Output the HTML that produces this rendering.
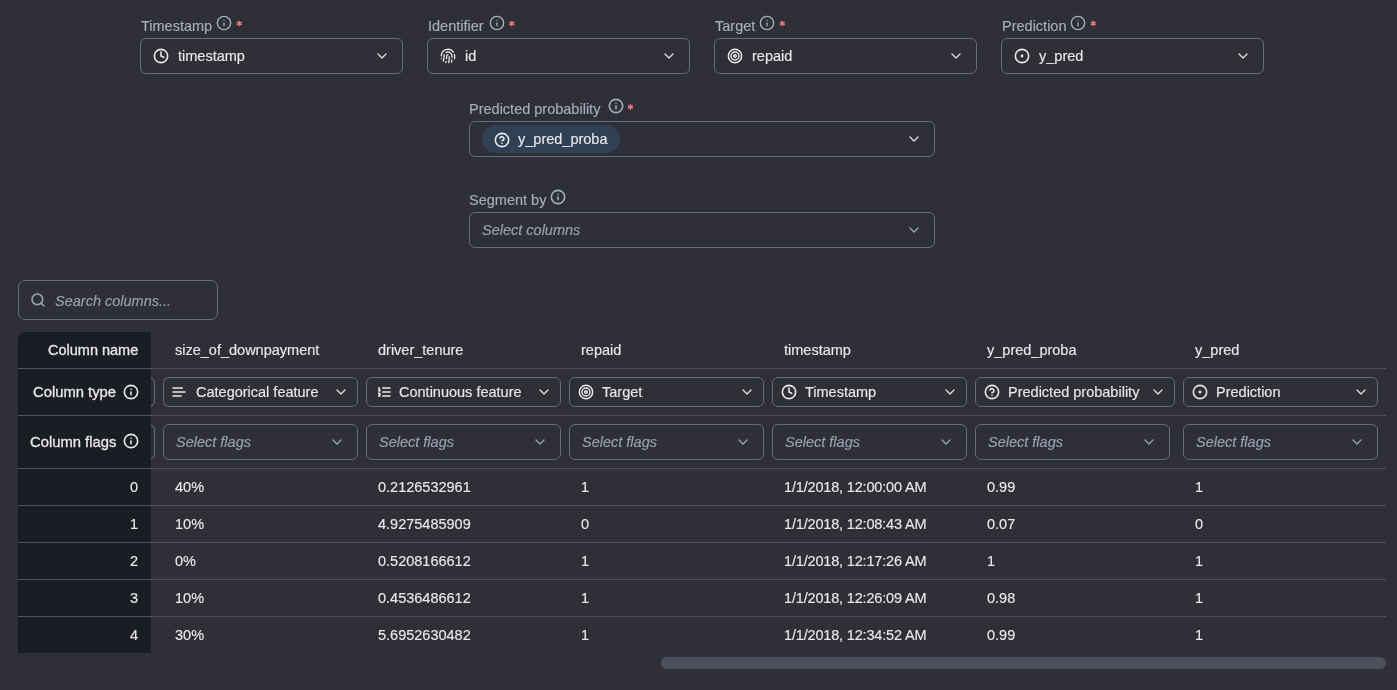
<!DOCTYPE html>
<html><head><meta charset="utf-8"><style>
html,body{margin:0;padding:0;width:1397px;height:690px;overflow:hidden;background:#2f2f38;}
body{position:relative;font-family:"Liberation Sans",sans-serif;}
.t{position:absolute;white-space:pre;will-change:transform;-webkit-text-stroke-width:0.15px;}
.b{position:absolute;box-sizing:border-box;}
svg{display:block;}
</style></head><body>
<div class="t" style="left:141px;top:16.92px;line-height:18.12px;font-size:14.5px;color:#a6afbd;font-style:normal;font-weight:400;">Timestamp</div><svg style="position:absolute;left:216px;top:15px" width="16" height="16" viewBox="0 0 24 24" fill="none" stroke="#a6afbd" stroke-width="2" stroke-linecap="round" stroke-linejoin="round"><circle cx="12" cy="12" r="10"/><path d="M12 16v-4"/><path d="M12 8h.01"/></svg><svg style="position:absolute;left:0;top:0;overflow:visible" width="1" height="1" stroke="#ef7b7b" stroke-width="1.3" stroke-linecap="round"><line x1="239.30" y1="21.15" x2="239.30" y2="25.85"/><line x1="237.26" y1="22.32" x2="241.34" y2="24.68"/><line x1="241.34" y1="22.32" x2="237.26" y2="24.68"/></svg><div class="b" style="left:140px;top:38px;width:263px;height:36px;border:1px solid #666c79;border-radius:6px;"></div><svg style="position:absolute;left:153px;top:48px" width="16" height="16" viewBox="0 0 24 24" fill="none" stroke="#e8e8ea" stroke-width="2.4" stroke-linecap="round" stroke-linejoin="round"><circle cx="12" cy="12" r="10"/><polyline points="12 6 12 12 16 14"/></svg><div class="t" style="left:177.7px;top:46.92px;line-height:18.12px;font-size:14.5px;color:#e8e8ea;font-style:normal;font-weight:400;">timestamp</div><svg style="position:absolute;left:374px;top:48px" width="16" height="16" viewBox="0 0 24 24" fill="none" stroke="#d9dade" stroke-width="2.1" stroke-linecap="round" stroke-linejoin="round"><path d="m6 9 6 6 6-6"/></svg><div class="t" style="left:427.5px;top:16.92px;line-height:18.12px;font-size:14.5px;color:#a6afbd;font-style:normal;font-weight:400;">Identifier</div><svg style="position:absolute;left:489px;top:15px" width="16" height="16" viewBox="0 0 24 24" fill="none" stroke="#a6afbd" stroke-width="2" stroke-linecap="round" stroke-linejoin="round"><circle cx="12" cy="12" r="10"/><path d="M12 16v-4"/><path d="M12 8h.01"/></svg><svg style="position:absolute;left:0;top:0;overflow:visible" width="1" height="1" stroke="#ef7b7b" stroke-width="1.3" stroke-linecap="round"><line x1="511.80" y1="21.15" x2="511.80" y2="25.85"/><line x1="509.76" y1="22.32" x2="513.84" y2="24.68"/><line x1="513.84" y1="22.32" x2="509.76" y2="24.68"/></svg><div class="b" style="left:427px;top:38px;width:263px;height:36px;border:1px solid #666c79;border-radius:6px;"></div><svg style="position:absolute;left:440px;top:48px" width="16" height="16" viewBox="0 0 24 24" fill="none" stroke="#e8e8ea" stroke-width="2.0" stroke-linecap="round" stroke-linejoin="round"><path d="M12 10a2 2 0 0 0-2 2c0 1.02-.1 2.51-.26 4"/><path d="M14 13.12c0 2.38 0 6.38-1 8.88"/><path d="M17.29 21.02c.12-.6.43-2.3.5-3.02"/><path d="M2 12a10 10 0 0 1 18-6"/><path d="M2 16h.01"/><path d="M21.8 16c.2-2 .131-5.354 0-6"/><path d="M5 19.5C5.5 18 6 15 6 12a6 6 0 0 1 .34-2"/><path d="M8.65 22c.21-.66.45-1.32.57-2"/><path d="M9 6.8a6 6 0 0 1 9 5.2v2"/></svg><div class="t" style="left:464.7px;top:46.92px;line-height:18.12px;font-size:14.5px;color:#e8e8ea;font-style:normal;font-weight:400;">id</div><svg style="position:absolute;left:661px;top:48px" width="16" height="16" viewBox="0 0 24 24" fill="none" stroke="#d9dade" stroke-width="2.1" stroke-linecap="round" stroke-linejoin="round"><path d="m6 9 6 6 6-6"/></svg><div class="t" style="left:715px;top:16.92px;line-height:18.12px;font-size:14.5px;color:#a6afbd;font-style:normal;font-weight:400;">Target</div><svg style="position:absolute;left:758.5px;top:15px" width="16" height="16" viewBox="0 0 24 24" fill="none" stroke="#a6afbd" stroke-width="2" stroke-linecap="round" stroke-linejoin="round"><circle cx="12" cy="12" r="10"/><path d="M12 16v-4"/><path d="M12 8h.01"/></svg><svg style="position:absolute;left:0;top:0;overflow:visible" width="1" height="1" stroke="#ef7b7b" stroke-width="1.3" stroke-linecap="round"><line x1="782.30" y1="21.15" x2="782.30" y2="25.85"/><line x1="780.26" y1="22.32" x2="784.34" y2="24.68"/><line x1="784.34" y1="22.32" x2="780.26" y2="24.68"/></svg><div class="b" style="left:714px;top:38px;width:263px;height:36px;border:1px solid #666c79;border-radius:6px;"></div><svg style="position:absolute;left:727px;top:48px" width="16" height="16" viewBox="0 0 24 24" fill="none" stroke="#e8e8ea" stroke-width="2.2" stroke-linecap="round" stroke-linejoin="round"><circle cx="12" cy="12" r="10"/><circle cx="12" cy="12" r="6"/><circle cx="12" cy="12" r="2"/></svg><div class="t" style="left:751.7px;top:46.92px;line-height:18.12px;font-size:14.5px;color:#e8e8ea;font-style:normal;font-weight:400;">repaid</div><svg style="position:absolute;left:948px;top:48px" width="16" height="16" viewBox="0 0 24 24" fill="none" stroke="#d9dade" stroke-width="2.1" stroke-linecap="round" stroke-linejoin="round"><path d="m6 9 6 6 6-6"/></svg><div class="t" style="left:1001.5px;top:16.92px;line-height:18.12px;font-size:14.5px;color:#a6afbd;font-style:normal;font-weight:400;">Prediction</div><svg style="position:absolute;left:1070px;top:15px" width="16" height="16" viewBox="0 0 24 24" fill="none" stroke="#a6afbd" stroke-width="2" stroke-linecap="round" stroke-linejoin="round"><circle cx="12" cy="12" r="10"/><path d="M12 16v-4"/><path d="M12 8h.01"/></svg><svg style="position:absolute;left:0;top:0;overflow:visible" width="1" height="1" stroke="#ef7b7b" stroke-width="1.3" stroke-linecap="round"><line x1="1093.30" y1="21.15" x2="1093.30" y2="25.85"/><line x1="1091.26" y1="22.32" x2="1095.34" y2="24.68"/><line x1="1095.34" y1="22.32" x2="1091.26" y2="24.68"/></svg><div class="b" style="left:1001px;top:38px;width:263px;height:36px;border:1px solid #666c79;border-radius:6px;"></div><svg style="position:absolute;left:1014px;top:48px" width="16" height="16" viewBox="0 0 24 24" fill="none" stroke="#e8e8ea" stroke-width="2.4" stroke-linecap="round" stroke-linejoin="round"><circle cx="12" cy="12" r="10"/><circle cx="12" cy="12" r="1"/></svg><div class="t" style="left:1038.7px;top:46.92px;line-height:18.12px;font-size:14.5px;color:#e8e8ea;font-style:normal;font-weight:400;">y_pred</div><svg style="position:absolute;left:1235px;top:48px" width="16" height="16" viewBox="0 0 24 24" fill="none" stroke="#d9dade" stroke-width="2.1" stroke-linecap="round" stroke-linejoin="round"><path d="m6 9 6 6 6-6"/></svg><div class="t" style="left:469.0px;top:99.92px;line-height:18.12px;font-size:14.5px;color:#a6afbd;font-style:normal;font-weight:400;">Predicted probability</div><svg style="position:absolute;left:608px;top:98px" width="16" height="16" viewBox="0 0 24 24" fill="none" stroke="#a6afbd" stroke-width="2.4" stroke-linecap="round" stroke-linejoin="round"><circle cx="12" cy="12" r="10"/><path d="M12 16v-4"/><path d="M12 8h.01"/></svg><svg style="position:absolute;left:0;top:0;overflow:visible" width="1" height="1" stroke="#ef7b7b" stroke-width="1.3" stroke-linecap="round"><line x1="630.40" y1="104.65" x2="630.40" y2="109.35"/><line x1="628.36" y1="105.83" x2="632.44" y2="108.17"/><line x1="632.44" y1="105.83" x2="628.36" y2="108.17"/></svg><div class="b" style="left:469px;top:121px;width:466px;height:36px;border:1px solid #666c79;border-radius:6px;"></div><div class="b" style="left:482px;top:125px;width:138px;height:28px;background:#304155;border-radius:14px;"></div><svg style="position:absolute;left:494.3px;top:132px" width="16" height="16" viewBox="0 0 24 24" fill="none" stroke="#e8e8ea" stroke-width="2.4" stroke-linecap="round" stroke-linejoin="round"><circle cx="12" cy="12" r="10"/><path d="M9.09 9a3 3 0 0 1 5.83 1c0 2-3 3-3 3"/><path d="M12 17h.01"/></svg><div class="t" style="left:518px;top:129.92px;line-height:18.12px;font-size:14.5px;color:#e8e8ea;font-style:normal;font-weight:400;">y_pred_proba</div><svg style="position:absolute;left:906.0px;top:131px" width="16" height="16" viewBox="0 0 24 24" fill="none" stroke="#d9dade" stroke-width="2.1" stroke-linecap="round" stroke-linejoin="round"><path d="m6 9 6 6 6-6"/></svg><div class="t" style="left:468.8px;top:190.92px;line-height:18.12px;font-size:14.5px;color:#a6afbd;font-style:normal;font-weight:400;">Segment by</div><svg style="position:absolute;left:550px;top:189px" width="16" height="16" viewBox="0 0 24 24" fill="none" stroke="#a6afbd" stroke-width="2.4" stroke-linecap="round" stroke-linejoin="round"><circle cx="12" cy="12" r="10"/><path d="M12 16v-4"/><path d="M12 8h.01"/></svg><div class="b" style="left:469px;top:212px;width:466px;height:36px;border:1px solid #666c79;border-radius:6px;"></div><div class="t" style="left:482px;top:220.92px;line-height:18.12px;font-size:14.5px;color:#98a1b1;font-style:italic;font-weight:400;">Select columns</div><svg style="position:absolute;left:906px;top:222px" width="16" height="16" viewBox="0 0 24 24" fill="none" stroke="#9aa2af" stroke-width="2.1" stroke-linecap="round" stroke-linejoin="round"><path d="m6 9 6 6 6-6"/></svg><div class="b" style="left:18px;top:280px;width:200px;height:40px;border:1px solid #666c79;border-radius:7px;"></div><svg style="position:absolute;left:30px;top:292px" width="16" height="16" viewBox="0 0 24 24" fill="none" stroke="#98a1b1" stroke-width="2.4" stroke-linecap="round" stroke-linejoin="round"><circle cx="11" cy="11" r="8"/><path d="m21 21-4.3-4.3"/></svg><div class="t" style="left:55px;top:291.92px;line-height:18.12px;font-size:14.5px;color:#98a1b1;font-style:italic;font-weight:400;">Search columns...</div><div class="b" style="left:18px;top:377px;width:137px;height:30px;border:1px solid #666c79;border-radius:6px;border-left:none;border-radius:0 6px 6px 0;"></div><div class="b" style="left:18px;top:424px;width:137px;height:36px;border:1px solid #666c79;border-radius:6px;border-left:none;border-radius:0 6px 6px 0;"></div><div class="t" style="left:175px;top:340.92px;line-height:18.12px;font-size:14.5px;color:#e8e8ea;font-style:normal;font-weight:400;">size_of_downpayment</div><div class="b" style="left:163px;top:377px;width:195px;height:30px;border:1px solid #666c79;border-radius:6px;"></div><svg style="position:absolute;left:171.4px;top:384px" width="16" height="16" viewBox="0 0 24 24" fill="none" stroke="#e8e8ea" stroke-width="2.4" stroke-linecap="round" stroke-linejoin="round"><path d="M17 6.1H3"/><path d="M21 12.1H3"/><path d="M15.1 18H3"/></svg><div class="t" style="left:196px;top:382.92px;line-height:18.12px;font-size:14.5px;color:#e8e8ea;font-style:normal;font-weight:400;">Categorical feature</div><svg style="position:absolute;left:333px;top:384px" width="16" height="16" viewBox="0 0 24 24" fill="none" stroke="#d9dade" stroke-width="2.1" stroke-linecap="round" stroke-linejoin="round"><path d="m6 9 6 6 6-6"/></svg><div class="b" style="left:163px;top:424px;width:195px;height:36px;border:1px solid #666c79;border-radius:6px;"></div><div class="t" style="left:176px;top:432.92px;line-height:18.12px;font-size:14.5px;color:#98a1b1;font-style:italic;font-weight:400;">Select flags</div><svg style="position:absolute;left:329.3px;top:434.3px" width="16" height="16" viewBox="0 0 24 24" fill="none" stroke="#9aa2af" stroke-width="2.1" stroke-linecap="round" stroke-linejoin="round"><path d="m6 9 6 6 6-6"/></svg><div class="t" style="left:175px;top:477.92px;line-height:18.12px;font-size:14.5px;color:#e8e8ea;font-style:normal;font-weight:400;">40%</div><div class="t" style="left:175px;top:514.92px;line-height:18.12px;font-size:14.5px;color:#e8e8ea;font-style:normal;font-weight:400;">10%</div><div class="t" style="left:175px;top:551.92px;line-height:18.12px;font-size:14.5px;color:#e8e8ea;font-style:normal;font-weight:400;">0%</div><div class="t" style="left:175px;top:588.92px;line-height:18.12px;font-size:14.5px;color:#e8e8ea;font-style:normal;font-weight:400;">10%</div><div class="t" style="left:175px;top:625.92px;line-height:18.12px;font-size:14.5px;color:#e8e8ea;font-style:normal;font-weight:400;">30%</div><div class="t" style="left:378px;top:340.92px;line-height:18.12px;font-size:14.5px;color:#e8e8ea;font-style:normal;font-weight:400;">driver_tenure</div><div class="b" style="left:366px;top:377px;width:195px;height:30px;border:1px solid #666c79;border-radius:6px;"></div><svg style="position:absolute;left:375.5px;top:384px" width="16" height="16" viewBox="0 0 24 24" fill="none" stroke="#e8e8ea" stroke-width="2.4" stroke-linecap="round" stroke-linejoin="round"><path d="M10 12h11"/><path d="M10 18h11"/><path d="M10 6h11"/><path d="M4 10h2"/><path d="M4 6h1v4"/><path d="M6 18H4c0-1 2-2 2-3s-1-1.5-2-1"/></svg><div class="t" style="left:399px;top:382.92px;line-height:18.12px;font-size:14.5px;color:#e8e8ea;font-style:normal;font-weight:400;">Continuous feature</div><svg style="position:absolute;left:536px;top:384px" width="16" height="16" viewBox="0 0 24 24" fill="none" stroke="#d9dade" stroke-width="2.1" stroke-linecap="round" stroke-linejoin="round"><path d="m6 9 6 6 6-6"/></svg><div class="b" style="left:366px;top:424px;width:195px;height:36px;border:1px solid #666c79;border-radius:6px;"></div><div class="t" style="left:379px;top:432.92px;line-height:18.12px;font-size:14.5px;color:#98a1b1;font-style:italic;font-weight:400;">Select flags</div><svg style="position:absolute;left:532.3px;top:434.3px" width="16" height="16" viewBox="0 0 24 24" fill="none" stroke="#9aa2af" stroke-width="2.1" stroke-linecap="round" stroke-linejoin="round"><path d="m6 9 6 6 6-6"/></svg><div class="t" style="left:378px;top:477.92px;line-height:18.12px;font-size:14.5px;color:#e8e8ea;font-style:normal;font-weight:400;">0.2126532961</div><div class="t" style="left:378px;top:514.92px;line-height:18.12px;font-size:14.5px;color:#e8e8ea;font-style:normal;font-weight:400;">4.9275485909</div><div class="t" style="left:378px;top:551.92px;line-height:18.12px;font-size:14.5px;color:#e8e8ea;font-style:normal;font-weight:400;">0.5208166612</div><div class="t" style="left:378px;top:588.92px;line-height:18.12px;font-size:14.5px;color:#e8e8ea;font-style:normal;font-weight:400;">0.4536486612</div><div class="t" style="left:378px;top:625.92px;line-height:18.12px;font-size:14.5px;color:#e8e8ea;font-style:normal;font-weight:400;">5.6952630482</div><div class="t" style="left:581px;top:340.92px;line-height:18.12px;font-size:14.5px;color:#e8e8ea;font-style:normal;font-weight:400;">repaid</div><div class="b" style="left:569px;top:377px;width:195px;height:30px;border:1px solid #666c79;border-radius:6px;"></div><svg style="position:absolute;left:578px;top:384px" width="16" height="16" viewBox="0 0 24 24" fill="none" stroke="#e8e8ea" stroke-width="2.2" stroke-linecap="round" stroke-linejoin="round"><circle cx="12" cy="12" r="10"/><circle cx="12" cy="12" r="6"/><circle cx="12" cy="12" r="2"/></svg><div class="t" style="left:602px;top:382.92px;line-height:18.12px;font-size:14.5px;color:#e8e8ea;font-style:normal;font-weight:400;">Target</div><svg style="position:absolute;left:739px;top:384px" width="16" height="16" viewBox="0 0 24 24" fill="none" stroke="#d9dade" stroke-width="2.1" stroke-linecap="round" stroke-linejoin="round"><path d="m6 9 6 6 6-6"/></svg><div class="b" style="left:569px;top:424px;width:195px;height:36px;border:1px solid #666c79;border-radius:6px;"></div><div class="t" style="left:582px;top:432.92px;line-height:18.12px;font-size:14.5px;color:#98a1b1;font-style:italic;font-weight:400;">Select flags</div><svg style="position:absolute;left:735.3px;top:434.3px" width="16" height="16" viewBox="0 0 24 24" fill="none" stroke="#9aa2af" stroke-width="2.1" stroke-linecap="round" stroke-linejoin="round"><path d="m6 9 6 6 6-6"/></svg><div class="t" style="left:581px;top:477.92px;line-height:18.12px;font-size:14.5px;color:#e8e8ea;font-style:normal;font-weight:400;">1</div><div class="t" style="left:581px;top:514.92px;line-height:18.12px;font-size:14.5px;color:#e8e8ea;font-style:normal;font-weight:400;">0</div><div class="t" style="left:581px;top:551.92px;line-height:18.12px;font-size:14.5px;color:#e8e8ea;font-style:normal;font-weight:400;">1</div><div class="t" style="left:581px;top:588.92px;line-height:18.12px;font-size:14.5px;color:#e8e8ea;font-style:normal;font-weight:400;">1</div><div class="t" style="left:581px;top:625.92px;line-height:18.12px;font-size:14.5px;color:#e8e8ea;font-style:normal;font-weight:400;">1</div><div class="t" style="left:784px;top:340.92px;line-height:18.12px;font-size:14.5px;color:#e8e8ea;font-style:normal;font-weight:400;">timestamp</div><div class="b" style="left:772px;top:377px;width:195px;height:30px;border:1px solid #666c79;border-radius:6px;"></div><svg style="position:absolute;left:781px;top:384px" width="16" height="16" viewBox="0 0 24 24" fill="none" stroke="#e8e8ea" stroke-width="2.4" stroke-linecap="round" stroke-linejoin="round"><circle cx="12" cy="12" r="10"/><polyline points="12 6 12 12 16 14"/></svg><div class="t" style="left:805px;top:382.92px;line-height:18.12px;font-size:14.5px;color:#e8e8ea;font-style:normal;font-weight:400;">Timestamp</div><svg style="position:absolute;left:942px;top:384px" width="16" height="16" viewBox="0 0 24 24" fill="none" stroke="#d9dade" stroke-width="2.1" stroke-linecap="round" stroke-linejoin="round"><path d="m6 9 6 6 6-6"/></svg><div class="b" style="left:772px;top:424px;width:195px;height:36px;border:1px solid #666c79;border-radius:6px;"></div><div class="t" style="left:785px;top:432.92px;line-height:18.12px;font-size:14.5px;color:#98a1b1;font-style:italic;font-weight:400;">Select flags</div><svg style="position:absolute;left:938.3px;top:434.3px" width="16" height="16" viewBox="0 0 24 24" fill="none" stroke="#9aa2af" stroke-width="2.1" stroke-linecap="round" stroke-linejoin="round"><path d="m6 9 6 6 6-6"/></svg><div class="t" style="left:784px;top:477.92px;line-height:18.12px;font-size:14.5px;color:#e8e8ea;font-style:normal;font-weight:400;letter-spacing:-0.17px;">1/1/2018, 12:00:00 AM</div><div class="t" style="left:784px;top:514.92px;line-height:18.12px;font-size:14.5px;color:#e8e8ea;font-style:normal;font-weight:400;letter-spacing:-0.17px;">1/1/2018, 12:08:43 AM</div><div class="t" style="left:784px;top:551.92px;line-height:18.12px;font-size:14.5px;color:#e8e8ea;font-style:normal;font-weight:400;letter-spacing:-0.17px;">1/1/2018, 12:17:26 AM</div><div class="t" style="left:784px;top:588.92px;line-height:18.12px;font-size:14.5px;color:#e8e8ea;font-style:normal;font-weight:400;letter-spacing:-0.17px;">1/1/2018, 12:26:09 AM</div><div class="t" style="left:784px;top:625.92px;line-height:18.12px;font-size:14.5px;color:#e8e8ea;font-style:normal;font-weight:400;letter-spacing:-0.17px;">1/1/2018, 12:34:52 AM</div><div class="t" style="left:987px;top:340.92px;line-height:18.12px;font-size:14.5px;color:#e8e8ea;font-style:normal;font-weight:400;">y_pred_proba</div><div class="b" style="left:975px;top:377px;width:200px;height:30px;border:1px solid #666c79;border-radius:6px;"></div><svg style="position:absolute;left:984px;top:384px" width="16" height="16" viewBox="0 0 24 24" fill="none" stroke="#e8e8ea" stroke-width="2.4" stroke-linecap="round" stroke-linejoin="round"><circle cx="12" cy="12" r="10"/><path d="M9.09 9a3 3 0 0 1 5.83 1c0 2-3 3-3 3"/><path d="M12 17h.01"/></svg><div class="t" style="left:1008px;top:382.92px;line-height:18.12px;font-size:14.5px;color:#e8e8ea;font-style:normal;font-weight:400;">Predicted probability</div><svg style="position:absolute;left:1150px;top:384px" width="16" height="16" viewBox="0 0 24 24" fill="none" stroke="#d9dade" stroke-width="2.1" stroke-linecap="round" stroke-linejoin="round"><path d="m6 9 6 6 6-6"/></svg><div class="b" style="left:975px;top:424px;width:195px;height:36px;border:1px solid #666c79;border-radius:6px;"></div><div class="t" style="left:988px;top:432.92px;line-height:18.12px;font-size:14.5px;color:#98a1b1;font-style:italic;font-weight:400;">Select flags</div><svg style="position:absolute;left:1141.3px;top:434.3px" width="16" height="16" viewBox="0 0 24 24" fill="none" stroke="#9aa2af" stroke-width="2.1" stroke-linecap="round" stroke-linejoin="round"><path d="m6 9 6 6 6-6"/></svg><div class="t" style="left:987px;top:477.92px;line-height:18.12px;font-size:14.5px;color:#e8e8ea;font-style:normal;font-weight:400;">0.99</div><div class="t" style="left:987px;top:514.92px;line-height:18.12px;font-size:14.5px;color:#e8e8ea;font-style:normal;font-weight:400;">0.07</div><div class="t" style="left:987px;top:551.92px;line-height:18.12px;font-size:14.5px;color:#e8e8ea;font-style:normal;font-weight:400;">1</div><div class="t" style="left:987px;top:588.92px;line-height:18.12px;font-size:14.5px;color:#e8e8ea;font-style:normal;font-weight:400;">0.98</div><div class="t" style="left:987px;top:625.92px;line-height:18.12px;font-size:14.5px;color:#e8e8ea;font-style:normal;font-weight:400;">0.99</div><div class="t" style="left:1195px;top:340.92px;line-height:18.12px;font-size:14.5px;color:#e8e8ea;font-style:normal;font-weight:400;">y_pred</div><div class="b" style="left:1183px;top:377px;width:195px;height:30px;border:1px solid #666c79;border-radius:6px;"></div><svg style="position:absolute;left:1192px;top:384px" width="16" height="16" viewBox="0 0 24 24" fill="none" stroke="#e8e8ea" stroke-width="2.4" stroke-linecap="round" stroke-linejoin="round"><circle cx="12" cy="12" r="10"/><circle cx="12" cy="12" r="1"/></svg><div class="t" style="left:1216px;top:382.92px;line-height:18.12px;font-size:14.5px;color:#e8e8ea;font-style:normal;font-weight:400;">Prediction</div><svg style="position:absolute;left:1353px;top:384px" width="16" height="16" viewBox="0 0 24 24" fill="none" stroke="#d9dade" stroke-width="2.1" stroke-linecap="round" stroke-linejoin="round"><path d="m6 9 6 6 6-6"/></svg><div class="b" style="left:1183px;top:424px;width:195px;height:36px;border:1px solid #666c79;border-radius:6px;"></div><div class="t" style="left:1196px;top:432.92px;line-height:18.12px;font-size:14.5px;color:#98a1b1;font-style:italic;font-weight:400;">Select flags</div><svg style="position:absolute;left:1349.3px;top:434.3px" width="16" height="16" viewBox="0 0 24 24" fill="none" stroke="#9aa2af" stroke-width="2.1" stroke-linecap="round" stroke-linejoin="round"><path d="m6 9 6 6 6-6"/></svg><div class="t" style="left:1195px;top:477.92px;line-height:18.12px;font-size:14.5px;color:#e8e8ea;font-style:normal;font-weight:400;">1</div><div class="t" style="left:1195px;top:514.92px;line-height:18.12px;font-size:14.5px;color:#e8e8ea;font-style:normal;font-weight:400;">0</div><div class="t" style="left:1195px;top:551.92px;line-height:18.12px;font-size:14.5px;color:#e8e8ea;font-style:normal;font-weight:400;">1</div><div class="t" style="left:1195px;top:588.92px;line-height:18.12px;font-size:14.5px;color:#e8e8ea;font-style:normal;font-weight:400;">1</div><div class="t" style="left:1195px;top:625.92px;line-height:18.12px;font-size:14.5px;color:#e8e8ea;font-style:normal;font-weight:400;">1</div><div class="b" style="left:18px;top:368px;width:1368px;height:1px;background:#4f525d"></div><div class="b" style="left:18px;top:415px;width:1368px;height:1px;background:#4f525d"></div><div class="b" style="left:18px;top:468px;width:1368px;height:1px;background:#4f525d"></div><div class="b" style="left:18px;top:505px;width:1368px;height:1px;background:#4f525d"></div><div class="b" style="left:18px;top:542px;width:1368px;height:1px;background:#4f525d"></div><div class="b" style="left:18px;top:579px;width:1368px;height:1px;background:#4f525d"></div><div class="b" style="left:18px;top:616px;width:1368px;height:1px;background:#4f525d"></div>
<div class="b" style="left:18px;top:332px;width:133px;height:321px;background:#1b1d24;border-top-left-radius:7px"></div><div class="b" style="left:18px;top:368px;width:133px;height:1px;background:#4f525d"></div><div class="b" style="left:18px;top:415px;width:133px;height:1px;background:#4f525d"></div><div class="b" style="left:18px;top:468px;width:133px;height:1px;background:#4f525d"></div><div class="b" style="left:18px;top:505px;width:133px;height:1px;background:#4f525d"></div><div class="b" style="left:18px;top:542px;width:133px;height:1px;background:#4f525d"></div><div class="b" style="left:18px;top:579px;width:133px;height:1px;background:#4f525d"></div><div class="b" style="left:18px;top:616px;width:133px;height:1px;background:#4f525d"></div><div class="t" style="right:1258.5px;top:340.92px;line-height:18.12px;font-size:14.5px;color:#e8e8ea;font-style:normal;font-weight:400;-webkit-text-stroke-width:0.3px;">Column name</div><div class="t" style="right:1280.5px;top:382.62px;line-height:18.5px;font-size:14.8px;color:#e8e8ea;font-style:normal;font-weight:400;-webkit-text-stroke-width:0.3px;">Column type</div><svg style="position:absolute;left:122.8px;top:383.6px" width="16" height="16" viewBox="0 0 24 24" fill="none" stroke="#e8e8ea" stroke-width="2.4" stroke-linecap="round" stroke-linejoin="round"><circle cx="12" cy="12" r="10"/><path d="M12 16v-4"/><path d="M12 8h.01"/></svg><div class="t" style="right:1280.5px;top:432.62px;line-height:18.5px;font-size:14.8px;color:#e8e8ea;font-style:normal;font-weight:400;-webkit-text-stroke-width:0.3px;">Column flags</div><svg style="position:absolute;left:122.8px;top:433.0px" width="16" height="16" viewBox="0 0 24 24" fill="none" stroke="#e8e8ea" stroke-width="2.4" stroke-linecap="round" stroke-linejoin="round"><circle cx="12" cy="12" r="10"/><path d="M12 16v-4"/><path d="M12 8h.01"/></svg><div class="t" style="right:1258.5px;top:477.92px;line-height:18.12px;font-size:14.5px;color:#e8e8ea;font-style:normal;font-weight:400;">0</div><div class="t" style="right:1258.5px;top:514.92px;line-height:18.12px;font-size:14.5px;color:#e8e8ea;font-style:normal;font-weight:400;">1</div><div class="t" style="right:1258.5px;top:551.92px;line-height:18.12px;font-size:14.5px;color:#e8e8ea;font-style:normal;font-weight:400;">2</div><div class="t" style="right:1258.5px;top:588.92px;line-height:18.12px;font-size:14.5px;color:#e8e8ea;font-style:normal;font-weight:400;">3</div><div class="t" style="right:1258.5px;top:625.92px;line-height:18.12px;font-size:14.5px;color:#e8e8ea;font-style:normal;font-weight:400;">4</div><div class="b" style="left:661px;top:657px;width:725px;height:12px;background:#4b505c;border-radius:6px"></div>
</body></html>
